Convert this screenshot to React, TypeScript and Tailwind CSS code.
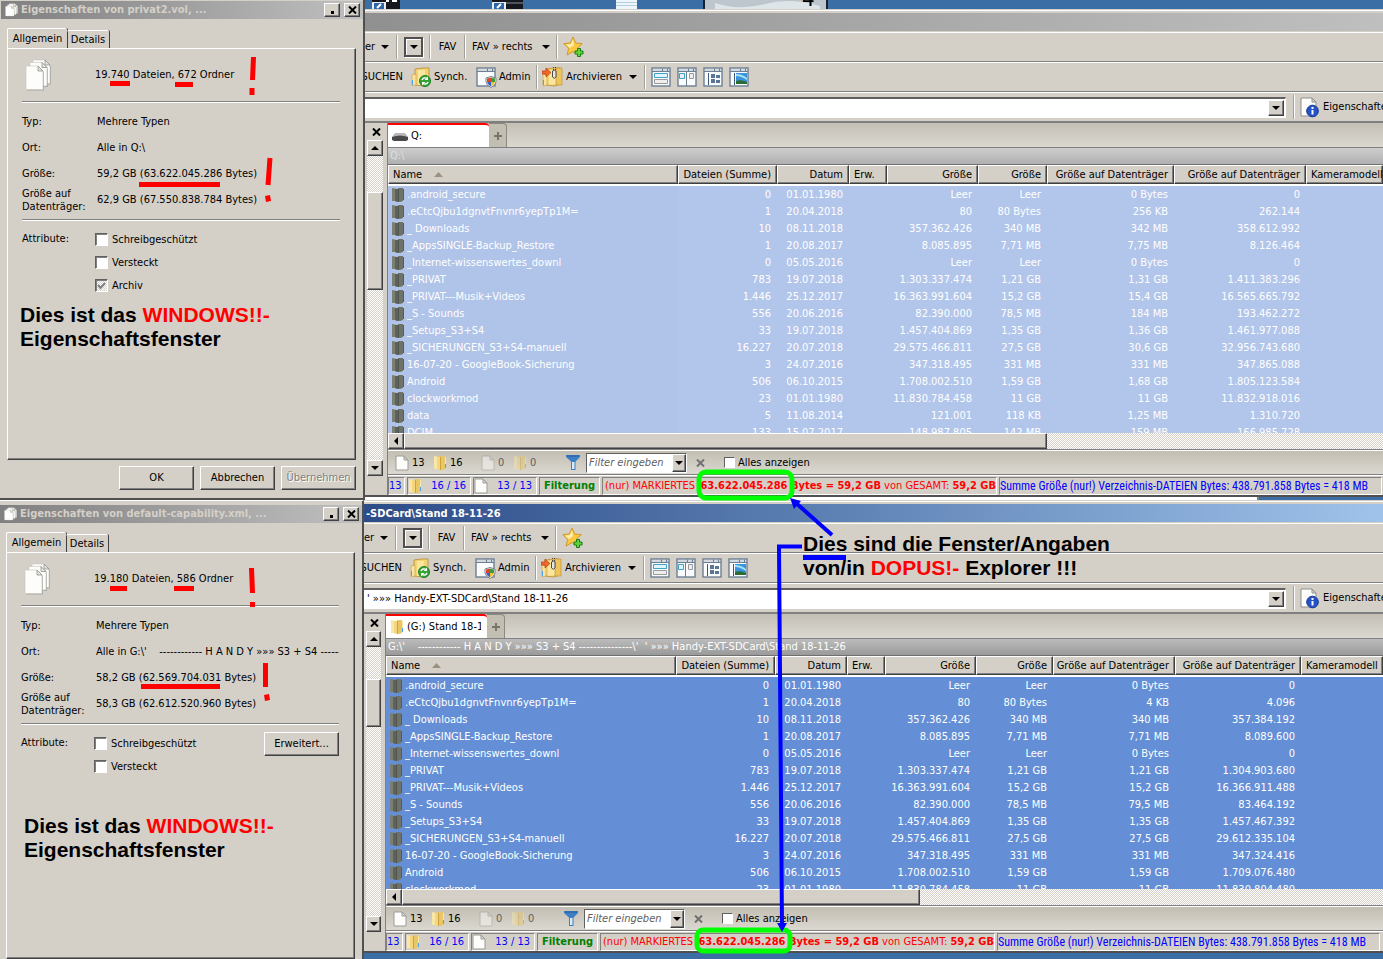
import type { ReactNode } from 'react'
import clsx from 'clsx'

const raised =
  'border border-t-white border-l-white border-r-[#404040] border-b-[#404040] shadow-[inset_-1px_-1px_0_#808080] bg-[#d4d0c8]'
const dither =
  'bg-[repeating-conic-gradient(#ffffff_0_25%,#d4d0c8_0_50%)] bg-[length:2px_2px]'

type Row = [string, string, string, string, string, string, string]

const namesAndSizes = [
  ['.android_secure', '0', '01.01.1980', 'Leer', 'Leer'],
  ['.eCtcQjbu1dgnvtFnvnr6yepTp1M=', '1', '20.04.2018', '80', '80 Bytes'],
  ['_ Downloads', '10', '08.11.2018', '357.362.426', '340 MB'],
  ['_AppsSINGLE-Backup_Restore', '1', '20.08.2017', '8.085.895', '7,71 MB'],
  ['_Internet-wissenswertes_downl', '0', '05.05.2016', 'Leer', 'Leer'],
  ['_PRIVAT', '783', '19.07.2018', '1.303.337.474', '1,21 GB'],
  ['_PRIVAT---Musik+Videos', '1.446', '25.12.2017', '16.363.991.604', '15,2 GB'],
  ['_S - Sounds', '556', '20.06.2016', '82.390.000', '78,5 MB'],
  ['_Setups_S3+S4', '33', '19.07.2018', '1.457.404.869', '1,35 GB'],
  ['_SICHERUNGEN_S3+S4-manuell', '16.227', '20.07.2018', '29.575.466.811', '27,5 GB'],
  ['16-07-20 - GoogleBook-Sicherung', '3', '24.07.2016', '347.318.495', '331 MB'],
  ['Android', '506', '06.10.2015', '1.708.002.510', '1,59 GB'],
  ['clockworkmod', '23', '01.01.1980', '11.830.784.458', '11 GB'],
  ['data', '5', '11.08.2014', '121.001', '118 KB'],
  ['DCIM', '133', '15.07.2017', '148.987.805', '142 MB'],
]

const diskQ = [
  ['0 Bytes', '0'],
  ['256 KB', '262.144'],
  ['342 MB', '358.612.992'],
  ['7,75 MB', '8.126.464'],
  ['0 Bytes', '0'],
  ['1,31 GB', '1.411.383.296'],
  ['15,4 GB', '16.565.665.792'],
  ['184 MB', '193.462.272'],
  ['1,36 GB', '1.461.977.088'],
  ['30,6 GB', '32.956.743.680'],
  ['331 MB', '347.865.088'],
  ['1,68 GB', '1.805.123.584'],
  ['11 GB', '11.832.918.016'],
  ['1,25 MB', '1.310.720'],
  ['159 MB', '166.985.728'],
]

const diskG = [
  ['0 Bytes', '0'],
  ['4 KB', '4.096'],
  ['340 MB', '357.384.192'],
  ['7,71 MB', '8.089.600'],
  ['0 Bytes', '0'],
  ['1,21 GB', '1.304.903.680'],
  ['15,2 GB', '16.366.911.488'],
  ['79,5 MB', '83.464.192'],
  ['1,35 GB', '1.457.467.392'],
  ['27,5 GB', '29.612.335.104'],
  ['331 MB', '347.324.416'],
  ['1,59 GB', '1.709.076.480'],
  ['11 GB', '11.830.804.480'],
]

const mergeRows = (disk: string[][]) =>
  disk.map((d, i) => [...namesAndSizes[i], ...d] as Row)

/* ---------- icons ---------- */

const Arrow = ({ dir = 'down' }: { dir?: 'down' | 'up' | 'left' }) => (
  <svg width="8" height="8" viewBox="0 0 8 8" className="shrink-0">
    {dir === 'down' && <path d="M0 2h8L4 6z" />}
    {dir === 'up' && <path d="M0 6h8L4 2z" />}
    {dir === 'left' && <path d="M6 0v8L2 4z" />}
  </svg>
)

const PagesIcon = ({ size }: { size: 'sm' | 'lg' }) => (
  <svg
    width={size === 'lg' ? 28 : 14}
    height={size === 'lg' ? 34 : 14}
    viewBox="0 0 28 34"
    preserveAspectRatio="none"
    className="shrink-0"
  >
    {[[8, 2], [5, 4.5], [1, 8]].map(([x, y]) => (
      <g key={x}>
        <path d={`M${x + 1} ${y + 1}h12l5 5v18.500h-17z`} fill="#8f8f8a" opacity=".6" />
        <path d={`M${x} ${y}h12l5 5v18.500h-17z`} fill="#fdfdfc" stroke="#c4c4be" strokeWidth=".6" />
        <path d={`M${x + 12} ${y}v5h5z`} fill="#e6e6e2" stroke="#8f8f8a" strokeWidth=".8" />
      </g>
    ))}
  </svg>
)

const FileIcon = ({ ghost = false }: { ghost?: boolean }) => (
  <svg width="14" height="16" viewBox="0 0 14 16" className={clsx('shrink-0', ghost && 'opacity-45')}>
    <path d="M1 1h8l4 4v10H1z" fill="#fdfdfc" stroke="#9b9b96" />
    <path d="M9 1v4h4z" fill="#d9d9d5" stroke="#9b9b96" />
  </svg>
)

const FolderIcon = ({ tone = 'normal' }: { tone?: 'normal' | 'ghost' | 'selected' }) => {
  const dark = tone === 'selected'
  return (
    <svg width="14" height="16" viewBox="0 0 14 16" className={clsx('shrink-0', tone === 'ghost' && 'opacity-45')}>
      <path d="M7 1h5v13l-3 1-2-1z" fill={dark ? '#6e7268' : '#e9c766'} />
      <path d="M12 2h1v11h-1z" fill={dark ? '#565c58' : '#f9e7a6'} />
      <path d="M1 1l5 1v13l-2-1H1z" fill={dark ? '#7b7e70' : '#f9e7a6'} />
      <path d="M4 2l3 0v13l-3-1z" fill={dark ? '#5d635b' : '#f3d67f'} />
      <path d="M7 2h1v13H7z" fill={dark ? '#4e554e' : '#cfa23a'} />
      <path d="M12 9h1v4h-1z" fill={dark ? '#3560a0' : '#4ba3ec'} />
    </svg>
  )
}

const StarIcon = () => (
  <svg width="22" height="22" viewBox="0 0 22 22">
    <path d="M10 1l2.700 6 6.600.7-5 4.500 1.600 6.800-5.900-3.500L4.200 19l1.400-6.800L.8 7.700 7.300 7z" fill="#fcc844" stroke="#d2982c" strokeLinejoin="round" />
    <path d="M10 3L8 8l-5 .6 4 3.400 4-3z" fill="#fff0ae" />
    <path d="M14.500 12.500h3v2.500H20v3h-2.500v2.500h-3V18H12v-3h2.500z" fill="#5cd43c" stroke="#1c7d16" />
  </svg>
)

const Folder20 = () => (
  <>
    <path d="M4 2l8-1h6v16l-5 2-9-1z" fill="#f3d372" stroke="#b98a2c" strokeWidth=".8" />
    <path d="M7 3h7v14l-7 1z" fill="#fbe6a0" />
    <path d="M1 8l4-1v11l-4 1z" fill="#f8e3a0" stroke="#c79b3d" strokeWidth=".6" />
    <path d="M1.500 13v5" stroke="#4ba3ec" />
  </>
)

const SyncIcon = () => (
  <svg width="20" height="20" viewBox="0 0 20 20" className="shrink-0">
    <Folder20 />
    <circle cx="14" cy="14" r="5.500" fill="#35a436" stroke="#1f7f28" />
    <path d="M11 13a3.300 3.300 0 0 1 5-1.500M17 15a3.300 3.300 0 0 1-5 1.500" fill="none" stroke="#fff" strokeWidth="1.400" />
    <path d="M17 9.500v3.500h-3.500zM11 18.500V15h3.500z" fill="#fff" />
  </svg>
)

const WindowFrame = () => (
  <>
    <rect x="1" y="1" width="18" height="18" fill="#fafbfc" stroke="#6d7f93" strokeWidth="1.400" />
    <path d="M2 3h16" stroke="#d3d9df" strokeWidth="2" />
    <path d="M1 4.500h18" stroke="#6d7f93" />
    <path d="M11.500 1.500v3M16.500 1.500v3" stroke="#6d7f93" />
  </>
)

const AdminIcon = () => (
  <svg width="21" height="21" viewBox="0 0 21 21" className="shrink-0">
    <WindowFrame />
    <path d="M15 9.500l5 1.500v4q-1 4-5 5.500-4-1.500-5-5.500v-4z" fill="#fff" stroke="#77808a" />
    <path d="M15 10.500v4.500h-4v-3.500z" fill="#e0452c" />
    <path d="M15 10.500l4 1v3.500h-4z" fill="#3d9b3a" />
    <path d="M11 15h4v4.500q-3-1.500-4-4.500z" fill="#3465c4" />
    <path d="M19 15h-4v4.500q3-1.500 4-4.500z" fill="#f3c22e" />
  </svg>
)

const ArchiveIcon = () => (
  <svg width="21" height="20" viewBox="0 0 21 20" className="shrink-0">
    <Folder20 />
    <path d="M14 1h6v17h-6z" fill="#eec55c" stroke="#b98a2c" strokeWidth=".6" />
    <path d="M0 4h4V1l5 4.500L4 10V7H0z" fill="#f0692a" stroke="#b43d10" strokeWidth=".7" />
    <path d="M11.500 0v3M13.500 0v6" stroke="#444" strokeDasharray="1 1" />
    <path d="M10.500 4q2-1.500 3.500 0v6q-1.700 2.500-3.500 0z" fill="#e8e8e8" stroke="#4b4b4b" />
  </svg>
)

const LayoutIcon = ({ kind }: { kind: number }) => (
  <svg width="20" height="20" viewBox="0 0 20 20" className="shrink-0">
    <WindowFrame />
    {kind === 0 && (
      <>
        <path d="M3.500 6.500h13v4h-13z" fill="#e2f4fb" stroke="#3fa3c6" />
        <path d="M3.500 12.500h13v4h-13z" fill="#eee" stroke="#9a9a9a" />
      </>
    )}
    {kind === 1 && (
      <>
        <path d="M9.500 5v14" stroke="#6d7f93" />
        <path d="M2.500 6.500h5v5h-5z" fill="#e2f4fb" stroke="#3fa3c6" />
        <path d="M12.500 6.500h4v5h-4z" fill="#eee" stroke="#9a9a9a" />
      </>
    )}
    {kind === 2 && (
      <>
        <path d="M5.500 6v12" stroke="#3e5878" />
        <path d="M8 7h4v4H8zM8 12h4v4H8zM13 8h4v3h-4zM13 13h4v3h-4z" fill="#5b7594" />
      </>
    )}
    {kind === 3 && (
      <>
        <path d="M5.500 6v12" stroke="#3e5878" />
        <path d="M7 6h11v11H7z" fill="#3a94dd" />
        <path d="M7 9q5 0 11 4v-2q-5-4-11-4z" fill="#a5e2f7" />
        <path d="M7 14q5-2 11 1v2H7z" fill="#2b6b35" />
      </>
    )}
  </svg>
)

const InfoIcon = () => (
  <svg width="19" height="21" viewBox="0 0 19 21" className="shrink-0">
    <path d="M1 1h11l4 4v14H1z" fill="#fdfdfc" stroke="#8f8f8a" />
    <path d="M12 1v4h4z" fill="#d9d9d5" stroke="#8f8f8a" />
    <circle cx="12.500" cy="14" r="5.800" fill="#2453c9" stroke="#123391" />
    <path d="M12.500 10v2M12.500 13v4.500" stroke="#fff" strokeWidth="2" />
  </svg>
)

const FunnelIcon = () => (
  <svg width="14" height="15" viewBox="0 0 14 15" className="shrink-0">
    <path d="M0 0h14v2L9.500 6.500V15H5V6.500L0 2z" fill="#3c7fc4" />
    <path d="M6 7h2.500v7H6z" fill="#dfe9f3" />
    <path d="M1 1h12" stroke="#255f9f" />
  </svg>
)

const Cross = ({ className }: { className: string }) => (
  <svg width="9" height="8" viewBox="0 0 9 8" className={className}>
    <path d="M1 .5l7 7M8 .5l-7 7" stroke="currentColor" strokeWidth="2" />
  </svg>
)

/* ---------- property dialogs ---------- */

interface DialogProps {
  title: string
  files: ReactNode
  location: string
  size: string
  sizeOnDisk: string
  archive?: boolean
  advanced?: boolean
  footer?: boolean
  className: string
}

function Attribute({ label, checked = false }: { label: string; checked?: boolean }) {
  return (
    <label className="flex h-[23px] items-center gap-1">
      <span className="relative flex">
        <input
          type="checkbox"
          defaultChecked={checked}
          disabled={checked}
          className={clsx(
            'size-[13px] appearance-none border border-t-[#606060] border-l-[#606060] border-r-white border-b-white bg-white shadow-[inset_1px_1px_0_#808080]',
            checked && dither
          )}
        />
        {checked && (
          <svg width="13" height="13" viewBox="0 0 13 13" className="pointer-events-none absolute inset-0">
            <path d="M3 6l2.500 3L10 4" fill="none" stroke="#808080" strokeWidth="2" />
          </svg>
        )}
      </span>
      {label}
    </label>
  )
}

const Rule = () => <div className="h-0.5 border-t border-b border-t-[#808080] border-b-white" />

function PropertiesDialog({
  title,
  files,
  location,
  size,
  sizeOnDisk,
  archive = false,
  advanced = false,
  footer = false,
  className,
}: DialogProps) {
  return (
    <section className={clsx('flex shrink-0 flex-col border-r-2 border-r-[#505050] bg-[#d4d0c8]', className)}>
      <header className="flex h-[18px] items-center gap-0.5 bg-linear-to-r from-[#808080] to-[#c0c0c0] pr-[3px] pl-1">
        <PagesIcon size="sm" />
        <h2 className="flex-1 truncate font-bold text-[#d4d0c8]">{title}</h2>
        <div className="flex gap-1">
          <button aria-label="Minimieren" className={clsx('flex h-3.5 w-4 items-end justify-center pb-0.5', raised)}>
            <span className="size-[3px] bg-black" />
          </button>
          <button aria-label="Schließen" className={clsx('flex h-3.5 w-4 items-center justify-center', raised)}>
            <Cross className="text-black" />
          </button>
        </div>
      </header>

      <div className="mt-[9px] flex items-end pl-1.5" role="tablist">
        <button role="tab" aria-selected className="h-5 w-[60px] rounded-t-xs border-t border-l border-white text-center shadow-[1px_0_0_#404040]">
          Allgemein
        </button>
        <button role="tab" aria-selected={false} className="h-[18px] w-[42px] rounded-t-xs border-t border-white text-center shadow-[1px_0_0_#404040]">
          Details
        </button>
      </div>

      <div className="mr-[7px] ml-1.5 flex-1 border border-t-white border-l-white border-r-[#404040] border-b-[#404040] shadow-[inset_-1px_-1px_0_#808080]">
        <div className="pr-[15px] pl-[14px]">
          <div className="flex h-[52px] items-center gap-[42px] pl-[3px]">
            <PagesIcon size="lg" />
            <span>{files}</span>
          </div>
          <Rule />
          <dl className="my-1.5 grid auto-rows-[26px] grid-cols-[75px_minmax(0,1fr)] items-center">
            <dt>Typ:</dt>
            <dd>Mehrere Typen</dd>
            <dt>Ort:</dt>
            <dd className="overflow-hidden whitespace-pre">{location}</dd>
            <dt>Größe:</dt>
            <dd>{size}</dd>
            <dt className="leading-[13px]">
              Größe auf
              <br />
              Datenträger:
            </dt>
            <dd>{sizeOnDisk}</dd>
          </dl>
          <Rule />
          <div className="mt-[7px] flex items-start">
            <span className="w-[73px] leading-[22px]">Attribute:</span>
            <div className="flex-1">
              <Attribute label="Schreibgeschützt" />
              <Attribute label="Versteckt" />
              {archive && <Attribute label="Archiv" checked />}
            </div>
            {advanced && <button className={clsx('h-6 w-[75px]', raised)}>Erweitert...</button>}
          </div>
        </div>
      </div>

      {footer && (
        <footer className="flex justify-end gap-1.5 pt-1.5 pr-[7px] pb-2">
          <button className={clsx('h-6 w-[75px]', raised)}>OK</button>
          <button className={clsx('h-6 w-[75px]', raised)}>Abbrechen</button>
          <button disabled className={clsx('h-6 w-[75px] text-[#808080] text-shadow-[1px_1px_0_#ffffff]', raised)}>
            Übernehmen
          </button>
        </footer>
      )}
    </section>
  )
}

/* ---------- file manager windows ---------- */

interface ExplorerProps {
  active?: boolean
  title: string
  address: string
  tab: ReactNode
  path: string
  rows: Row[]
  widths: string[]
  treeWidth: string
  listHeight: string
  thumb: string
  verticalThumb: string
}

const Divider = () => <span className="h-6 w-0.5 shrink-0 border-l border-l-[#a0a09c] bg-white" />

function Toolbars() {
  return (
    <>
      <div className="flex h-[30px] items-center border-t border-b border-t-white border-b-[#808080]">
        <button className="flex w-[31px] items-center justify-between pr-[7px]">
          er <Arrow />
        </button>
        <Divider />
        <button aria-label="Verlauf" className="mx-1.5 flex h-5 w-[19px] items-center justify-center border-2 border-[#505050] shadow-[inset_1px_1px_0_#ffffff,1px_1px_0_#ffffff]">
          <Arrow />
        </button>
        <Divider />
        <button className="w-[33px] text-center">FAV</button>
        <Divider />
        <button className="flex w-[90px] items-center justify-between px-1.5">
          FAV » rechts <Arrow />
        </button>
        <Divider />
        <button aria-label="Favorit hinzufügen" className="ml-[5px]">
          <StarIcon />
        </button>
      </div>
      <div className="flex h-[30px] items-center border-t border-b border-t-white border-b-[#808080]">
        <div className="flex w-[46px] shrink-0 justify-end overflow-hidden pr-2">
          <button>SUCHEN</button>
        </div>
        <button className="flex w-[65px] items-center gap-[3px]">
          <SyncIcon /> Synch.
        </button>
        <button className="flex w-[60px] items-center gap-0.5">
          <AdminIcon /> Admin
        </button>
        <Divider />
        <button className="flex w-[106px] items-center gap-[3px] pl-1">
          <ArchiveIcon />
          <span className="flex-1 text-left">Archivieren</span>
          <span className="pr-[7px]">
            <Arrow />
          </span>
        </button>
        <Divider />
        <div className="ml-[5px] flex gap-1.5">
          {['Horizontal', 'Vertikal', 'Baum', 'Vorschau'].map((name, i) => (
            <button key={name} aria-label={name}>
              <LayoutIcon kind={i} />
            </button>
          ))}
        </div>
      </div>
    </>
  )
}

function Address({ value }: { value: string }) {
  return (
    <div className="flex h-[31px] items-center border-t border-b-2 border-t-white border-b-[#808080]">
      <div className="flex h-[21px] flex-1 border-t-2 border-r border-b border-t-[#606060] border-r-white border-b-white bg-white p-px">
        <input aria-label="Adresse" defaultValue={value} className="min-w-0 flex-1 px-0.5 outline-none" />
        <button aria-label="Adressen" className={clsx('flex w-4 items-center justify-center', raised)}>
          <Arrow />
        </button>
      </div>
      <div className="ml-[7px] flex w-[90px] items-center gap-[5px] overflow-hidden">
        <Divider />
        <button className="flex items-center gap-1 whitespace-nowrap">
          <InfoIcon /> Eigenschaften
        </button>
      </div>
    </div>
  )
}

const headings = [
  'Dateien (Summe)',
  'Datum',
  'Erw.',
  'Größe',
  'Größe',
  'Größe auf Datenträger',
  'Größe auf Datenträger',
  'Kameramodell',
]

function FileList({ rows, widths, active }: { rows: Row[]; widths: string[]; active: boolean }) {
  const th =
    'h-[19px] border border-t-white border-l-white border-r-[#404040] border-b-[#404040] bg-[#d4d0c8] font-normal shadow-[inset_-1px_-1px_0_#808080]'
  return (
    <table className={clsx('w-full table-fixed border-separate border-spacing-0 whitespace-nowrap', active ? 'bg-[#648fd6]' : 'bg-[#b2c5ea]')}>
      <colgroup>
        {widths.map((w, i) => (
          <col key={i} className={w} />
        ))}
        <col />
      </colgroup>
      <thead>
        <tr>
          <th className={clsx(th, 'pl-1 text-left')}>
            Name
            <svg width="9" height="5" viewBox="0 0 9 5" className="ml-3 inline">
              <path d="M0 5L4.500 0 9 5z" fill="#9c9180" />
            </svg>
          </th>
          {headings.map((h, i) => (
            <th key={i} className={clsx(th, h === 'Erw.' || h === 'Kameramodell' ? 'pl-1 text-left' : 'pr-[5px] text-right')}>
              {h}
            </th>
          ))}
        </tr>
      </thead>
      <tbody className="text-white">
        <tr aria-hidden>
          <td colSpan={9} className="h-0.5 bg-white" />
        </tr>
        {rows.map(([name, count, date, bytes, size, disk, diskBytes]) => (
          <tr key={name} className="[&>td]:h-[17px] [&>td]:px-1.5 [&>td]:text-right [&>td]:leading-[17px]">
            <td className={active ? '' : 'bg-[#b0c3e8]'}>
              <span className="-mx-[3px] flex items-center gap-0.5">
                <FolderIcon tone="selected" />
                {name}
              </span>
            </td>
            <td>{count}</td>
            <td>{date}</td>
            <td />
            <td>{bytes}</td>
            <td>{size}</td>
            <td>{disk}</td>
            <td>{diskBytes}</td>
            <td />
          </tr>
        ))}
      </tbody>
    </table>
  )
}

function FilterBar() {
  return (
    <div className="flex h-[25px] items-center border-t border-b border-t-white border-b-[#808080] bg-linear-to-b from-[#c2beb2] to-[#dbd8d1] pl-[7px]">
      <span className="flex w-[38px] items-center gap-[3px]"><FileIcon /> 13</span>
      <span className="flex w-12 items-center gap-[3px]"><FolderIcon /> 16</span>
      <span className="flex w-8 items-center gap-[3px] text-[#606060]"><FileIcon ghost /> 0</span>
      <span className="flex w-[53px] items-center gap-[3px] text-[#606060]"><FolderIcon tone="ghost" /> 0</span>
      <FunnelIcon />
      <div className="ml-1.5 flex h-5 w-[101px] border border-t-[#606060] border-l-[#606060] border-r-white border-b-white bg-white">
        <input aria-label="Filter" placeholder="Filter eingeben" className="min-w-0 flex-1 pl-0.5 italic outline-none placeholder:text-[#606060]" />
        <button aria-label="Filterliste" className={clsx('flex w-3.5 items-center justify-center', raised)}>
          <Arrow />
        </button>
      </div>
      <button aria-label="Filter löschen" className="mx-[9px] w-[9px]">
        <Cross className="text-[#707070]" />
      </button>
      <label className="ml-2.5 flex items-center gap-[3px]">
        <input type="checkbox" className="size-[11px] appearance-none border border-t-[#606060] border-l-[#606060] border-r-white border-b-white bg-white" />
        Alles anzeigen
      </label>
    </div>
  )
}

function StatusBar() {
  const cell =
    'flex h-[18px] shrink-0 items-center border border-t-[#808080] border-l-[#808080] border-r-white border-b-white'
  return (
    <div className="flex h-5 items-start gap-0.5 border-t border-t-white pt-px whitespace-nowrap text-[#0000ff]">
      <span className={clsx(cell, 'w-[17px]')}>13</span>
      <span className={clsx(cell, 'w-16 justify-between pr-1')}><FolderIcon /> 16 / 16</span>
      <span className={clsx(cell, 'w-16 justify-between pr-1')}><FileIcon /> 13 / 13</span>
      <strong className={clsx(cell, 'w-[61px] justify-center text-[#008000]')}>Filterung</strong>
      <span className={clsx(cell, 'w-[395px] pl-0.5 text-[#ff0000]')}>
        <span className="flex-1">(nur) MARKIERTES</span>
        <strong>63.622.045.286 Bytes = 59,2 GB</strong>&nbsp;von GESAMT:&nbsp;<strong>59,2 GB</strong>
      </span>
      <span className={clsx(cell, "w-[383px] font-['Roboto','DejaVu_Sans',sans-serif] text-xs")}>
        Summe Größe (nur!) Verzeichnis-DATEIEN Bytes: 438.791.858 Bytes = 418 MB
      </span>
    </div>
  )
}

function Explorer({
  active = false,
  title,
  address,
  tab,
  path,
  rows,
  widths,
  treeWidth,
  listHeight,
  thumb,
  verticalThumb,
}: ExplorerProps) {
  return (
    <section className="overflow-hidden border-b-2 border-b-[#505050] bg-[#d4d0c8]">
      <div className="h-0.5 border-b border-b-white" />
      <header
        className={clsx(
          'h-[21px] border-t-2 border-b border-[#d4d0c8] bg-linear-to-r bg-clip-padding px-0.5 leading-[19px] font-bold text-white',
          active ? 'from-[#2c4c88] to-[#9fc3ea]' : 'from-[#909090] to-[#bfbfbf]'
        )}
      >
        {title}
      </header>
      <Toolbars />
      <Address value={address} />
      <div className="flex">
        <div className={clsx('flex shrink-0 flex-col border-r border-r-[#808080] pr-1 pl-0.5', treeWidth)}>
          <button aria-label="Baum schließen" className="flex h-[17px] items-center justify-center pl-0.5">
            <Cross className="text-black" />
          </button>
          <div className={clsx('flex flex-1 flex-col', dither)}>
            <button aria-label="Nach oben" className={clsx('flex h-4 items-center justify-center', raised)}>
              <Arrow dir="up" />
            </button>
            <div className={clsx(verticalThumb, raised)} />
            <button aria-label="Nach unten" className={clsx('mt-auto flex h-4 items-center justify-center', raised)}>
              <Arrow />
            </button>
          </div>
          <div className="h-[19px] bg-[#d4d0c8]" />
        </div>
        <div className="min-w-0 flex-1">
          <div className="flex h-[25px] items-end border-b border-b-[#808080] bg-linear-to-b from-[#c3bfb5] to-[#dbd8d1]">
            <div className="flex h-6 w-[101px] items-center gap-[3px] overflow-hidden rounded-tr-sm border-t-2 border-t-[#ff0000] bg-white pr-1.5 pl-1">
              {tab}
            </div>
            <button aria-label="Neuer Tab" className="flex h-6 w-[18px] items-center justify-center rounded-tr-sm border-t border-r border-[#8c8980] bg-[#c2beb2]">
              <svg width="8" height="8" viewBox="0 0 8 8">
                <path d="M4 0v8M0 4h8" stroke="#77746c" strokeWidth="2" />
              </svg>
            </button>
          </div>
          <div
            className={clsx(
              'h-[17px] overflow-hidden border-b border-b-[#707070] bg-linear-to-b px-0.5 leading-4 whitespace-pre',
              active ? 'from-[#bcbcbc] to-[#9a9a9a] text-white' : 'from-[#cecece] to-[#b0b0b0] text-[#dedede]'
            )}
          >
            {path}
          </div>
          <div className={clsx('overflow-hidden', listHeight)}>
            <FileList rows={rows} widths={widths} active={active} />
          </div>
          <div className={clsx('flex h-4', dither)}>
            <button aria-label="Nach links" className={clsx('flex w-4 items-center justify-center', raised)}>
              <Arrow dir="left" />
            </button>
            <div className={clsx(thumb, raised)} />
          </div>
          <div className="h-px bg-[#808080]" />
          <FilterBar />
          <StatusBar />
        </div>
      </div>
    </section>
  )
}

/* ---------- desktop and notes ---------- */

function DesktopStrip() {
  return (
    <div className="relative h-[9px] overflow-hidden">
      <svg width="480" height="9" className="absolute top-0 left-0">
        <path d="M7 0h28v9H7zM127 0h31v9h-31z" fill="#15171c" />
        <path d="M7 2h14v7H7zM127 2h14v7h-14z" fill="#e8eef5" />
        <path d="M9 3h10v6H9zM129 3h10v6h-10z" fill="#2e66a8" />
        <path d="M12 8l4-4M132 8l4-4" stroke="#fff" strokeWidth="2" />
        <path d="M21 1h3M27 1h5" stroke="#fff" strokeWidth="2" />
        <path d="M141 3h17" stroke="#8a929c" />
        <path d="M251 0h21v9h-21z" fill="#eff6fb" />
        <path d="M251 2.500h21M251 5.500h21" stroke="#b3cfe2" />
        <path d="M338 0h125v9H338z" fill="#16222c" />
        <path d="M340 0h121v9H340z" fill="#bcc6cc" />
        <path d="M350 3q25 8 50 1t55 2v3H350z" fill="#dde5e9" />
      </svg>
      <span className="absolute -top-3 left-[437px] text-[22px] leading-[22px] text-black">4</span>
    </div>
  )
}

function Marks() {
  return (
    <svg width="1383" height="959" viewBox="0 0 1383 959" className="pointer-events-none absolute top-0 left-0" fill="none">
      <g stroke="#ff0000" strokeWidth="5">
        <path d="M110 83.500h20M175 84.500h18M139 184.500h81" />
        <path d="M253.500 57l-1 23M252 88v7M270 158l-2 27" />
        <path d="M265 196l5-1 1 6-5 1z" fill="#ff0000" stroke="none" />
        <path d="M110 588.500h17M174 588.500h20M141 686.500h79" />
        <path d="M251.500 568l1 25M252.500 602v5M265.500 663v24" />
        <path d="M264 695l5-1 1 6-5 1z" fill="#ff0000" stroke="none" />
      </g>
      <g stroke="#00ff00" strokeWidth="5">
        <rect x="699" y="472" width="93" height="26" rx="7" />
        <rect x="697" y="930" width="93" height="21" rx="6" />
      </g>
      <g stroke="#0000ff" strokeWidth="4">
        <path d="M803 557.500h43" strokeWidth="5" />
        <path d="M802 546.500h-23l3 380" />
        <path d="M832 535l-36-32" />
        <path d="M777 923h10l-5 9zM790 498l4 11 7-8z" fill="#0000ff" stroke="none" />
      </g>
    </svg>
  )
}

const note = 'absolute text-[21px] leading-6 font-bold whitespace-nowrap font-["Liberation_Sans",Arial,sans-serif]'

export default function App() {
  return (
    <main className="relative flex min-h-screen flex-col overflow-hidden bg-[#3a6ea5] font-['DejaVu_Sans_Condensed','DejaVu_Sans',sans-serif] text-[11px] leading-[14px] text-black [font-stretch:condensed]">
      <div className="flex">
        <PropertiesDialog
          className="w-[365px] border-b-2 border-b-[#505050] pt-px pl-px"
          title="Eigenschaften von privat2.vol, ..."
          files="19.740 Dateien, 672 Ordner"
          location="Alle in Q:\"
          size="59,2 GB (63.622.045.286 Bytes)"
          sizeOnDisk="62,9 GB (67.550.838.784 Bytes)"
          archive
          footer
        />
        <div className="min-w-0 flex-1">
          <DesktopStrip />
          <Explorer
            title=""
            address=""
            tab={
              <>
                <svg width="16" height="9" viewBox="0 0 16 9" className="shrink-0">
                  <path d="M3 1h10l3 4v3H0V5z" fill="#b9b9b9" />
                  <path d="M0 5q8-3 16 0v3l-2 1H2L0 8z" fill="#4a4a4a" />
                </svg>
                Q:
              </>
            }
            path="Q:\"
            rows={mergeRows(diskQ)}
            widths={['w-[290px]', 'w-[99px]', 'w-[72px]', 'w-[38px]', 'w-[91px]', 'w-[69px]', 'w-[127px]', 'w-[132px]']}
            treeWidth="w-[23px]"
            listHeight="h-[268px]"
            thumb="w-[643px]"
            verticalThumb="mt-9 h-[98px]"
          />
          <div className="mr-[124px] h-[3px] border-r-2 border-r-[#808080] bg-white" />
        </div>
      </div>

      <div className="flex flex-1">
        <PropertiesDialog
          className="w-[364px] border-t border-t-white pt-1"
          title="Eigenschaften von default-capability.xml, ..."
          files="19.180 Dateien, 586 Ordner"
          location={"Alle in G:\\'    ------------ H A N D Y »»» S3 + S4 ---------------"}
          size="58,2 GB (62.569.704.031 Bytes)"
          sizeOnDisk="58,3 GB (62.612.520.960 Bytes)"
          advanced
        />
        <div className="min-w-0 flex-1">
          <Explorer
            active
            title="-SDCard\Stand 18-11-26"
            address="' »»» Handy-EXT-SDCard\Stand 18-11-26"
            tab={
              <>
                <FolderIcon />
                <span className="overflow-hidden whitespace-nowrap">(G:) Stand 18-1</span>
              </>
            }
            path={"G:\\'    ------------ H A N D Y »»» S3 + S4 ---------------\\'  ' »»» Handy-EXT-SDCard\\Stand 18-11-26"}
            rows={mergeRows(diskG)}
            widths={['w-[290px]', 'w-[99px]', 'w-[72px]', 'w-[38px]', 'w-[91px]', 'w-[77px]', 'w-[122px]', 'w-[126px]']}
            treeWidth="w-[22px]"
            listHeight="h-[233px]"
            thumb="w-[518px]"
            verticalThumb="mt-8 h-[48px]"
          />
        </div>
      </div>

      <p className={clsx(note, 'top-[303px] left-5')}>
        Dies ist das <span className="text-[#ff0000]">WINDOWS!!-</span>
        <br />
        Eigenschaftsfenster
      </p>
      <p className={clsx(note, 'top-[814px] left-6')}>
        Dies ist das <span className="text-[#ff0000]">WINDOWS!!-</span>
        <br />
        Eigenschaftsfenster
      </p>
      <p className={clsx(note, 'top-[532px] left-[803px]')}>
        Dies sind die Fenster/Angaben
        <br />
        von/in <span className="text-[#ff0000]">DOPUS!-</span> Explorer !!!
      </p>
      <Marks />
    </main>
  )
}
